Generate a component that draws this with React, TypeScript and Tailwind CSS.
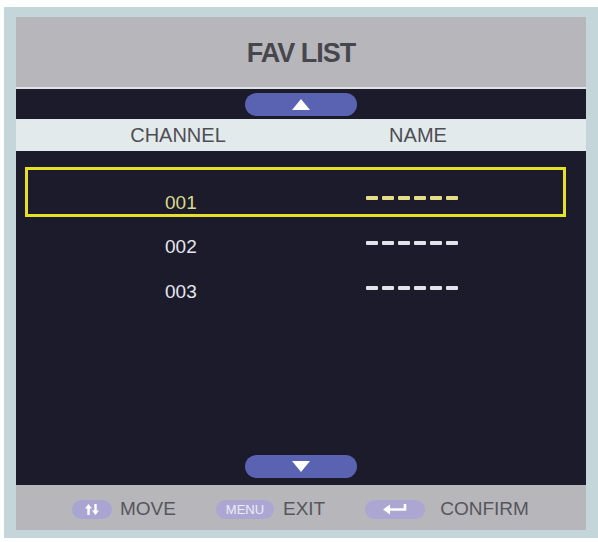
import React from "react";

const rows = [
  { ch: "001", active: true },
  { ch: "002", active: false },
  { ch: "003", active: false },
];

function Dashes({ active }: { active: boolean }) {
  return (
    <div className="mb-[10px] flex gap-[4px]">
      {Array.from({ length: 6 }).map((_, i) => (
        <span
          key={i}
          className={`h-[4px] w-[12px] rounded-[1px] ${active ? "bg-[#e8dc86]" : "bg-[#e2e2ea]"}`}
        />
      ))}
    </div>
  );
}

function Pill({ down }: { down?: boolean }) {
  return (
    <div className="flex h-[23px] w-[112px] items-center justify-center rounded-full bg-[#5a62b2]">
      <svg width="18" height="11" viewBox="0 0 18 11">
        {down ? <polygon points="0,0 18,0 9,11" fill="#ffffff" /> : <polygon points="9,0 18,11 0,11" fill="#ffffff" />}
      </svg>
    </div>
  );
}

export default function App() {
  return (
    <div className="h-[542px] w-[598px] bg-white pt-[7px] pl-[4px]" style={{ fontFamily: '"Liberation Sans", Arial, sans-serif' }}>
      <div className="bg-[#c4d6da] px-[12px] pt-[10px] pb-[8px]">
        <div className="flex h-[513px] flex-col bg-[#b7b6bb]">
          {/* title */}
          <div className="flex h-[70px] items-center justify-center pt-[2px]">
            <span className="text-[27px] font-bold tracking-[-1px] text-[#46464d]">FAV LIST</span>
          </div>

          {/* top scroll band */}
          <div className="flex h-[32px] items-center justify-center border-t-2 border-[#dfe3e6] bg-[#1c1b2b]">
            <Pill />
          </div>

          {/* header row */}
          <div className="flex h-[32px] items-center bg-[#e3eaec] text-[20px] text-[#4e4e55]">
            <span className="w-[324px] text-center">CHANNEL</span>
            <span className="w-[156px] text-center">NAME</span>
          </div>

          {/* list */}
          <div className="flex flex-1 flex-col bg-[#1c1b2b] pt-[16px]">
            {rows.map((r, i) => (
              <div
                key={r.ch}
                className={`ml-[9px] mr-[20px] flex items-center border-[3px] pl-[137px] ${
                  r.active
                    ? "h-[50px] border-[#e6e02a] pt-[22px]"
                    : "h-[45px] border-transparent"
                } ${i === 1 ? "mt-[8px]" : ""}`}
              >
                <span className={`w-[201px] text-[19px] ${r.active ? "text-[#d9d98a]" : "text-[#e6e6ee]"}`}>{r.ch}</span>
                <Dashes active={r.active} />
              </div>
            ))}
            <div className="mt-auto mb-[7px] flex justify-center">
              <Pill down />
            </div>
          </div>

          {/* footer */}
          <div className="flex h-[45px] items-center pl-[56px] pt-[3px] text-[19px] text-[#56565d]">
            <div className="flex h-[19px] w-[40px] items-center justify-center rounded-full bg-[#a9a5d2]">
              <svg width="16" height="11" viewBox="0 0 16 11">
                <path d="M4.5 11 V3" stroke="#ffffff" strokeWidth="2.4" />
                <polygon points="4.5,0 8,4.5 1,4.5" fill="#ffffff" />
                <path d="M11.5 0 V8" stroke="#ffffff" strokeWidth="2.4" />
                <polygon points="11.5,11 15,6.5 8,6.5" fill="#ffffff" />
              </svg>
            </div>
            <span className="ml-[8px]">MOVE</span>
            <div className="ml-[40px] flex h-[19px] w-[58px] items-center justify-center rounded-full bg-[#aba7d2] text-[13px] leading-none text-[#ececf6]">
              MENU
            </div>
            <span className="ml-[9px]">EXIT</span>
            <div className="ml-[40px] flex h-[19px] w-[60px] items-center justify-center rounded-full bg-[#aba7d2]">
              <svg width="26" height="12" viewBox="0 0 26 12">
                <path d="M23 1 V6.5 H7" stroke="#ffffff" strokeWidth="2.6" fill="none" />
                <polygon points="1,6.5 8,1.5 8,11.5" fill="#ffffff" />
              </svg>
            </div>
            <span className="ml-[15px]">CONFIRM</span>
          </div>
        </div>
      </div>
    </div>
  );
}
